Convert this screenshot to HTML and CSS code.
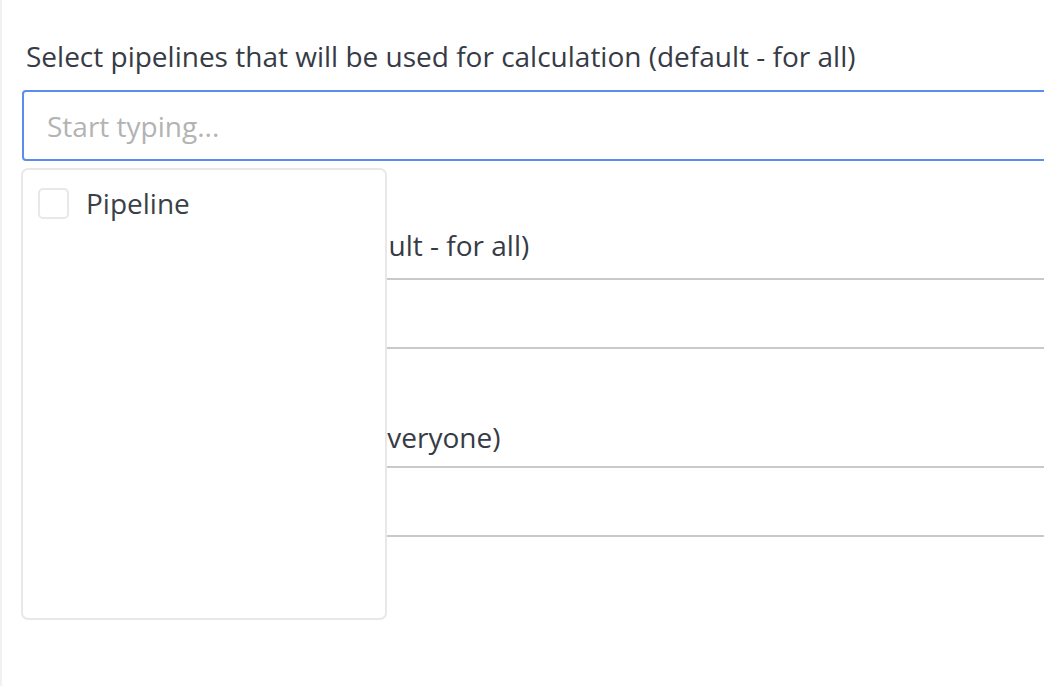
FILE: index.html
```html
<!DOCTYPE html>
<html>
<head>
<meta charset="utf-8">
<link rel="stylesheet" href="styles.css">
</head>
<body>
<div class="page">
  <div class="form">
    <div class="field f1">
      <label class="label">Select pipelines that will be used for calculation (default - for all)</label>
      <div class="input focused"><span class="placeholder">Start typing...</span></div>
      <div class="dropdown">
        <div class="option"><span class="check"></span><span class="opt-text">Pipeline</span></div>
      </div>
    </div>
    <div class="field f2">
      <label class="label">Select stage for report (default - for all)</label>
      <div class="input"></div>
    </div>
    <div class="field f3">
      <label class="label">Select managers (default - everyone)</label>
      <div class="input"></div>
    </div>
  </div>
</div>
</body>
</html>
```
FILE: styles.css
```css
html, body {
  margin: 0;
  padding: 0;
  background: #ffffff;
  overflow: hidden;
  height: 686px;
}
.page {
  border-left: 2px solid #f1f1f1;
  height: 686px;
  box-sizing: border-box;
  padding-left: 20px;
  font-family: "Open Sans", "Lato", sans-serif;
  color: #363b45;
}
.form {
  width: 1100px;
  padding-top: 39px;
}
.field {
  position: relative;
  display: flex;
  flex-direction: column;
}
.label {
  display: block;
  font-size: 28px;
  line-height: 34px;
  padding-left: 4px;
  margin-bottom: 17px;
}
.f2 { margin-top: 67px; }
.f2 .label { margin-bottom: 16px; }
.f3 { margin-top: 71px; }
.f3 .label { margin-bottom: 12px; }
.input {
  height: 71px;
  box-sizing: border-box;
  border: 2px solid #c9c9c9;
  border-radius: 4px;
  display: flex;
  align-items: center;
  padding-left: 23px;
}
.input.focused {
  border-color: #5b8def;
}
.placeholder {
  font-size: 28px;
  color: #b3b3b3;
}
.dropdown {
  position: absolute;
  left: -1px;
  top: 129px;
  width: 366px;
  height: 452px;
  box-sizing: border-box;
  background: #ffffff;
  border: 2px solid #e8e8e8;
  border-radius: 7px;
  z-index: 2;
  padding: 16px 0 0 15px;
}
.option {
  display: flex;
  align-items: center;
  gap: 17px;
}
.check {
  width: 31px;
  height: 31px;
  box-sizing: border-box;
  border: 2px solid #e8e8e8;
  border-radius: 5px;
}
.opt-text {
  font-size: 28px;
  line-height: 34px;
  color: #3a3f48;
}
```
